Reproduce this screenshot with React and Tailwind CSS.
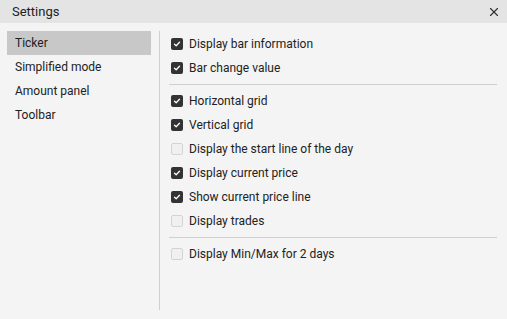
import { X } from "lucide-react";

const groups = [
  [
    { label: "Display bar information", on: true },
    { label: "Bar change value", on: true },
  ],
  [
    { label: "Horizontal grid", on: true },
    { label: "Vertical grid", on: true },
    { label: "Display the start line of the day", on: false },
    { label: "Display current price", on: true },
    { label: "Show current price line", on: true },
    { label: "Display trades", on: false },
  ],
  [{ label: "Display Min/Max for 2 days", on: false }],
];

const tabs = ["Ticker", "Simplified mode", "Amount panel", "Toolbar"];

function Check({ on }) {
  if (!on) {
    return (
      <span className="h-[12px] w-[12px] shrink-0 rounded-[2px] border border-[#d4d4d4] bg-[#f0f0f0]" />
    );
  }
  return (
    <span className="flex h-[12px] w-[12px] shrink-0 items-center justify-center rounded-[2px] bg-[#333333]">
      <svg width="8" height="8" viewBox="0 0 8 8" fill="none">
        <path d="M1.5 4.2 L3.2 5.8 L6.5 2.3" stroke="white" strokeWidth="1.3" strokeLinecap="round" strokeLinejoin="round" />
      </svg>
    </span>
  );
}

export default function App() {
  return (
    <div className="flex h-[319px] w-[507px] flex-col bg-[#f4f4f4] font-['Roboto',sans-serif] text-[#222]">
      <div className="flex h-[23px] items-center justify-between bg-[#e4e4e4] pl-[12px] pr-[6px]">
        <span className="text-[13px] text-[#222]">Settings</span>
        <X size={14} strokeWidth={2} className="text-[#333]" />
      </div>
      <div className="flex flex-1 pt-[8px]">
        <div className="flex w-[159px] flex-col pl-[7px] pr-[8px] pb-[9px]">
          {tabs.map((t, i) => (
            <div
              key={t}
              className={`flex h-[24px] items-center pl-[8px] text-[12px] ${i === 0 ? "bg-[#c8c8c8]" : ""}`}
            >
              {t}
            </div>
          ))}
        </div>
        <div className="mb-[9px] w-px bg-[#cfcfcf]" />
        <div className="flex flex-1 flex-col pl-[9px] pr-[10px] pt-[1px]">
          {groups.map((g, gi) => (
            <div key={gi} className={gi > 0 ? "border-t border-[#cfcfcf] pt-[4px]" : ""}>
              {g.map((r) => (
                <div key={r.label} className="flex h-[24px] items-center gap-[6px] pl-[2px] text-[12px]">
                  <Check on={r.on} />
                  <span>{r.label}</span>
                </div>
              ))}
              {gi < groups.length - 1 && <div className="h-[4px]" />}
            </div>
          ))}
        </div>
      </div>
    </div>
  );
}
